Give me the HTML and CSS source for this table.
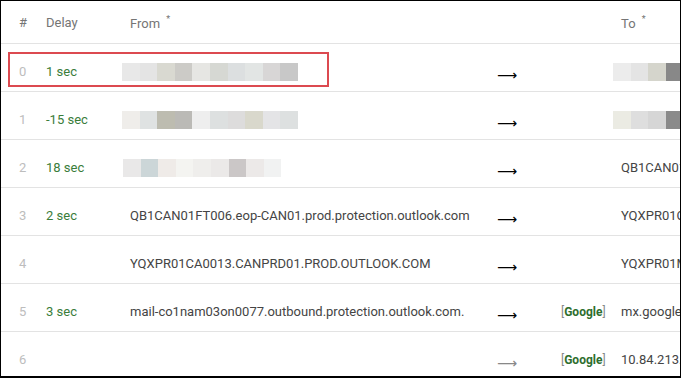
FILE: index.html
```html
<!DOCTYPE html>
<html lang="en">

<head>
	<meta charset="UTF-8">
	<title>Message hops</title>
	<link rel="stylesheet" href="styles.css">
</head>

<body>

	<div class="frame">

		<div class="row head">
			<div>#</div>
			<div>Delay</div>
			<div>From <sup>*</sup></div>
			<div></div>
			<div></div>
			<div>To <sup>*</sup></div>
		</div>

		<div class="row marked">
			<div class="num">0</div>
			<div class="delay">1 sec</div>
			<div class="host">
				<span class="blur">
					<i style="background:#e8e8e8"></i><i style="background:#e4e4e4"></i><i style="background:#d9d9d1"></i><i style="background:#cccbc7"></i><i style="background:#e6e6e3"></i><i style="background:#d6d8d3"></i><i style="background:#dcdfe0"></i><i style="background:#e2e5e4"></i><i style="background:#d8d6d6"></i><i style="background:#c8c8c8"></i>
				</span>
			</div>
			<div class="arrow">&#10230;</div>
			<div></div>
			<div class="host">
				<span class="blur tail">
					<i style="background:#ececec"></i><i style="background:#e4e4e4"></i><i style="background:#d5d5cc"></i><i style="background:#888888"></i>
				</span>
			</div>
		</div>

		<div class="row">
			<div class="num">1</div>
			<div class="delay">-15 sec</div>
			<div class="host">
				<span class="blur">
					<i style="background:#efedea"></i><i style="background:#dfe2e2"></i><i style="background:#bdbcb0"></i><i style="background:#bbbab6"></i><i style="background:#eeeeee"></i><i style="background:#dde0e0"></i><i style="background:#dddcdc"></i><i style="background:#d9d8cc"></i><i style="background:#e4e4e6"></i><i style="background:#dde0e0"></i>
				</span>
			</div>
			<div class="arrow">&#10230;</div>
			<div></div>
			<div class="host">
				<span class="blur tail">
					<i style="background:#ebebe3"></i><i style="background:#dedede"></i><i style="background:#d6d6d6"></i><i style="background:#8a8a8a"></i>
				</span>
			</div>
		</div>

		<div class="row">
			<div class="num">2</div>
			<div class="delay">18 sec</div>
			<div class="host">
				<span class="blur short">
					<i style="background:#e9e8e8"></i><i style="background:#ccd6d8"></i><i style="background:#efebe8"></i><i style="background:#f4f4f1"></i><i style="background:#efeeec"></i><i style="background:#ebe9e8"></i><i style="background:#cbc7c7"></i><i style="background:#ece9e8"></i><i style="background:#f1f2f2"></i>
				</span>
			</div>
			<div class="arrow">&#10230;</div>
			<div></div>
			<div class="host">QB1CAN01FT006.eop-CAN01.prod.protection.outlook.com</div>
		</div>

		<div class="row">
			<div class="num">3</div>
			<div class="delay">2 sec</div>
			<div class="host">QB1CAN01FT006.eop-CAN01.prod.protection.outlook.com</div>
			<div class="arrow">&#10230;</div>
			<div></div>
			<div class="host">YQXPR01CA0013.CANPRD01.PROD.OUTLOOK.COM</div>
		</div>

		<div class="row">
			<div class="num">4</div>
			<div class="delay"></div>
			<div class="host">YQXPR01CA0013.CANPRD01.PROD.OUTLOOK.COM</div>
			<div class="arrow">&#10230;</div>
			<div></div>
			<div class="host">YQXPR01MB2134.CANPRD01.PROD.OUTLOOK.COM</div>
		</div>

		<div class="row">
			<div class="num">5</div>
			<div class="delay">3 sec</div>
			<div class="host">mail-co1nam03on0077.outbound.protection.outlook.com.</div>
			<div class="arrow">&#10230;</div>
			<div class="via">[<b>Google</b>]</div>
			<div class="host">mx.google.com</div>
		</div>

		<div class="row">
			<div class="num">6</div>
			<div class="delay"></div>
			<div class="host"></div>
			<div class="arrow faded">&#10230;</div>
			<div class="via">[<b>Google</b>]</div>
			<div class="host">10.84.213.134</div>
		</div>

	</div> <!-- end frame -->

</body>

</html>
```

FILE: styles.css
```css
body {
	background: #fff;
	font: 13px/1.2 Roboto, 'Liberation Sans', sans-serif;
	margin: 0;
}

.frame {
	border: 1px solid #000;
	border-bottom-width: 2px;
	box-sizing: border-box;
	height: 378px;
	overflow: hidden;
	width: 681px;
}

.row {
	align-items: center;
	border-bottom: 1px solid #e3e3e3;
	box-sizing: border-box;
	display: grid;
	grid-template-columns: 27px 84px 367px 64px 60px 1fr;
	height: 48px;
	padding: 9px 0 0 18px;
	position: relative;
	white-space: nowrap;
}

.row > div {
	min-width: 0;
}

.head {
	color: #757575;
	height: 43px;
	padding-top: 2px;
}

.head sup {
	font-size: 9px;
	margin-left: 3px;
	vertical-align: 6px;
}

.marked:after {
	border: 2px solid #dc4a50;
	box-sizing: border-box;
	content: "";
	height: 35px;
	left: 7px;
	position: absolute;
	top: 8px;
	width: 321px;
}

.num {
	color: #bdbdbd;
}

.delay {
	color: #3a7d3a;
}

.host {
	color: #444;
}

.arrow {
	color: #000;
	font: 14px/1 'DejaVu Sans', sans-serif;
	padding-top: 5px;
}

.arrow.faded {
	color: #888;
}

.via {
	color: #888;
	font-size: 12px;
}

.via b {
	color: #2e6e2e;
	font-weight: 700;
}

.blur {
	display: flex;
	height: 18px;
	margin: -1px 0 0 -8px;
}

.blur i {
	display: block;
	flex: 0 0 17.6px;
}

.blur.short {
	margin-left: -7px;
}

.blur.tail {
	margin-left: -8px;
}
```
